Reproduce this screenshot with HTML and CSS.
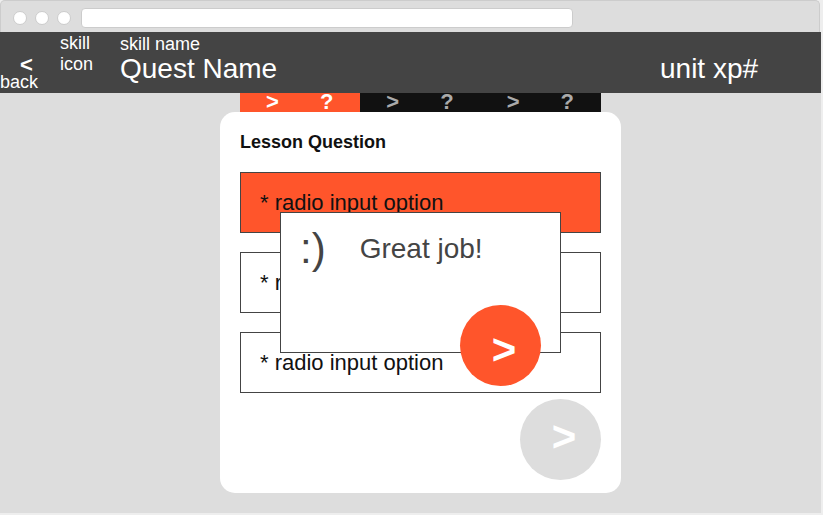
FILE: index.html
```html
<!DOCTYPE html>
<html lang="en">
<head>
<meta charset="utf-8">
<meta name="viewport" content="width=device-width, initial-scale=1">
<title>Quest Name</title>
<link rel="stylesheet" href="styles.css">
</head>
<body>
<div class="browser">
  <div class="chrome">
    <span class="dot"></span>
    <span class="dot"></span>
    <span class="dot"></span>
    <input class="address" type="text" aria-label="Address">
  </div>

  <header class="topbar">
    <a class="back" href="#"><span class="back-arrow">&lt;</span><span>back</span></a>
    <div class="skill-icon">skill icon</div>
    <div class="titles">
      <div class="skill-name">skill name</div>
      <h1 class="quest-name">Quest Name</h1>
    </div>
    <div class="unit-xp">unit xp#</div>
  </header>

  <main class="lesson">
    <nav class="steps">
      <button class="step step-active" type="button"><span>&gt;</span><span>?</span></button>
      <button class="step" type="button"><span>&gt;</span><span>?</span></button>
      <button class="step" type="button"><span>&gt;</span><span>?</span></button>
    </nav>

    <form class="card">
      <fieldset class="question">
        <legend class="question-title">Lesson Question</legend>
        <label class="option"><input type="radio" name="answer" checked><span>* radio input option</span></label>
        <label class="option"><input type="radio" name="answer"><span>* radio input option</span></label>
        <label class="option"><input type="radio" name="answer"><span>* radio input option</span></label>
      </fieldset>
      <button class="round round-disabled" type="button">&gt;</button>

      <div class="dialog" role="dialog" aria-labelledby="feedback">
        <span class="smile">:)</span>
        <p class="feedback" id="feedback">Great job!</p>
        <button class="round round-next" type="button">&gt;</button>
      </div>
    </form>
  </main>
</div>
</body>
</html>
```
FILE: styles.css
```css
* {
  box-sizing: border-box;
}

body {
  margin: 0;
  background: #eee;
  color: #111;
  font-family: "Liberation Sans", Arial, sans-serif;
  font-size: 18px;
  line-height: 21px;
}

button {
  padding: 0;
  border: 0;
  font: inherit;
  font-weight: bold;
}

.browser {
  margin: 0 2px 2px 0;
  padding-bottom: 20px;
  background: linear-gradient(#ddd, #ddd) 0 32px no-repeat;
}

.chrome {
  display: flex;
  align-items: center;
  gap: 8px;
  height: 32px;
  margin-right: 1px;
  padding: 2px 12px 0;
  border: 1px solid #ccc;
  border-bottom: 0;
  border-radius: 5px 5px 0 0;
  background: #ddd;
}

.dot {
  width: 14px;
  height: 14px;
  border: 1px solid #ccc;
  border-radius: 50%;
  background: #fff;
}

.address {
  width: 62%;
  height: 20px;
  margin-left: 2px;
  padding: 0 6px;
  border: 1px solid #ccc;
  border-radius: 4px;
  background: #fff;
}

.topbar {
  display: grid;
  grid-template-columns: 60px 60px 1fr 161px;
  height: 61px;
  padding-top: 1px;
  background: #444;
  color: #fff;
}

.back {
  display: flex;
  flex-direction: column;
  justify-content: flex-end;
  color: inherit;
  text-decoration: none;
}

.back-arrow {
  padding-left: 20px;
  font-size: 22px;
  font-weight: bold;
  line-height: 14px;
}

.skill-icon {
  width: 40px;
}

.titles {
  padding-top: 1px;
}

.quest-name {
  margin: 0;
  font-size: 28px;
  font-weight: normal;
  line-height: 28px;
}

.unit-xp {
  padding-top: 22px;
  font-size: 28px;
  line-height: 28px;
}

.lesson {
  max-width: 621px;
  padding-left: 220px;
}

.steps {
  display: grid;
  grid-template-columns: repeat(3, 1fr);
  margin: 0 20px;
}

.step {
  display: flex;
  justify-content: space-between;
  align-items: flex-start;
  height: 19px;
  padding: 0 27px 0 26px;
  background: #111;
  color: #aaa;
  font-size: 22px;
  line-height: 17px;
}

.step-active {
  background: #ff552b;
  color: #fff;
}

.card {
  position: relative;
  display: flex;
  flex-direction: column;
  padding: 20px 20px 13px;
  border-radius: 15px;
  background: #fff;
}

.question {
  display: grid;
  gap: 19px;
  min-width: 0;
  margin: 0;
  padding: 0;
  border: 0;
}

.question-title {
  margin-bottom: 19px;
  padding: 0;
  font-weight: bold;
}

.option {
  display: flex;
  align-items: center;
  height: 61px;
  padding: 0 19px;
  border: 1px solid #444;
  font-size: 22px;
}

.option input {
  appearance: none;
  width: 0;
  height: 0;
  margin: 0;
}

.option:has(input:checked) {
  background: #ff552b;
}

.round {
  width: 81px;
  height: 81px;
  padding: 0 0 5px 7px;
  border-radius: 50%;
  color: #fff;
  font-size: 42px;
  line-height: 42px;
}

.round-disabled {
  align-self: flex-end;
  margin-top: 6px;
  background: #ddd;
}

.dialog {
  position: absolute;
  top: 100px;
  left: 60px;
  right: 60px;
  display: flex;
  gap: 34px;
  height: 141px;
  padding: 15px 19px;
  border: 1px solid #444;
  background: #fff;
  color: #444;
}

.smile {
  font-size: 42px;
  line-height: 42px;
}

.feedback {
  margin: 0;
  font-size: 28px;
  line-height: 42px;
}

.round-next {
  position: absolute;
  right: 19px;
  bottom: -34px;
  padding: 8px 0 0 7px;
  background: #ff552b;
}
```
